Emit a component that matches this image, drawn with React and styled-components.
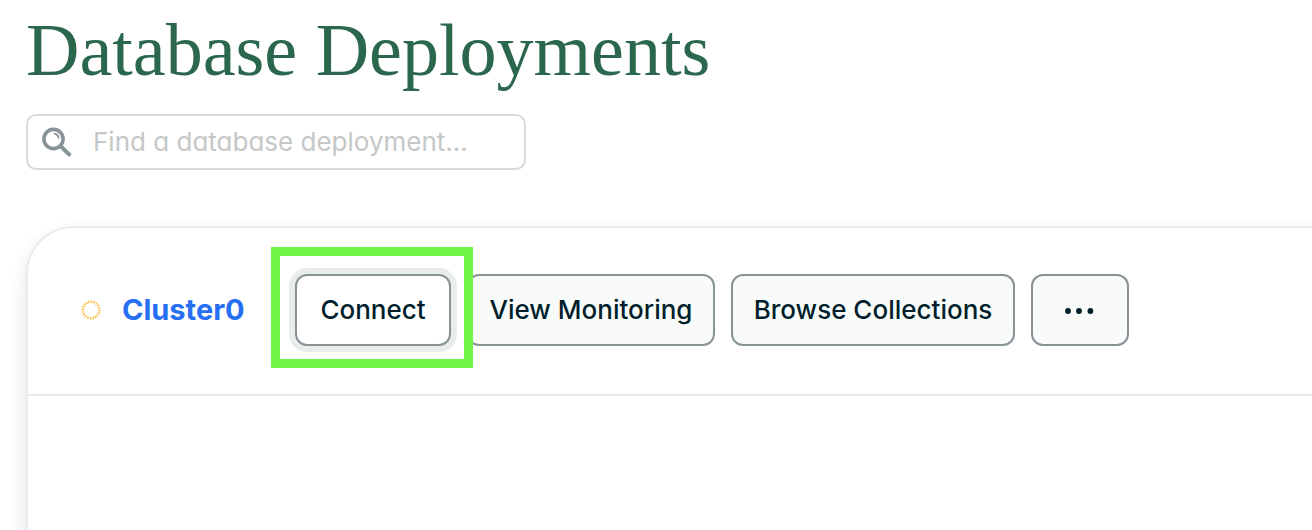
import React from "react";
import styled, { createGlobalStyle } from "styled-components";

const GlobalStyle = createGlobalStyle`
  *, *::before, *::after { box-sizing: border-box; }
  body {
    margin: 0;
    background: #fff;
    color: #001e2b;
    font-family: Inter, "Liberation Sans", sans-serif;
    font-feature-settings: "cv11" 1;
  }
`;

const Page = styled.main`
  display: flex;
  flex-direction: column;
  min-height: 100vh;
  padding: 10px 0 0 26px;
  overflow: hidden;
`;

const Title = styled.h1`
  margin: 0 0 24px;
  font-family: "Liberation Serif", serif;
  font-size: 74px;
  line-height: 80px;
  font-weight: 400;
  color: #2a674d;
`;

const SearchField = styled.label`
  display: flex;
  align-items: center;
  gap: 20px;
  width: 500px;
  max-width: calc(100% - 26px);
  height: 56px;
  padding: 0 14px;
  border: 2px solid #d5dbd9;
  border-radius: 10px;
  color: #889397;
`;

const SearchInput = styled.input`
  flex: 1;
  min-width: 0;
  padding: 0;
  border: 0;
  outline: 0;
  background: transparent;
  color: #001e2b;
  font: inherit;
  font-feature-settings: inherit;
  font-size: 26px;
  line-height: 36px;
  &::placeholder { color: #c3c7c6; opacity: 1; }
`;

const Card = styled.section`
  flex: 1 0 auto;
  margin: 56px -48px -48px 0;
  border: 2px solid #e8edeb;
  border-radius: 48px;
  background: #fff;
  box-shadow: 0 8px 20px -4px rgba(0, 30, 43, 0.2);
`;

const CardHeader = styled.header`
  display: flex;
  align-items: center;
  padding: 46px 54px 48px 53px;
  border-bottom: 2px solid #e8edeb;
`;

const ClusterLink = styled.a`
  width: 124px;
  margin: 0 49px 0 21px;
  color: #266ef2;
  font-size: 29px;
  line-height: 40px;
  font-weight: 700;
  text-decoration: none;
`;

const Actions = styled.div`
  display: flex;
  gap: 16px;
`;

const Highlight = styled.div`
  position: relative;
  z-index: 1;
  &::after {
    content: "";
    position: absolute;
    inset: -27px -22px -22px -24px;
    border: 9px solid #70f549;
    pointer-events: none;
  }
`;

const Button = styled.button`
  display: flex;
  align-items: center;
  justify-content: center;
  min-width: ${({ $minWidth }) => $minWidth}px;
  height: 72px;
  padding: 0 20px;
  border: 2px solid #889397;
  border-radius: 12px;
  background: ${({ $active }) => ($active ? "#fff" : "#f9fbfa")};
  box-shadow: ${({ $active }) => ($active ? "0 0 0 6px #e8edeb" : "none")};
  color: #001e2b;
  font: inherit;
  font-size: 26px;
  line-height: 36px;
  font-weight: 500;
  white-space: nowrap;
`;

const CardBody = styled.div`
  min-height: 180px;
`;

function SearchIcon() {
  return (
    <svg width="31" height="31" viewBox="0 0 31 31" fill="none" stroke="currentColor" aria-hidden="true">
      <circle cx="11.5" cy="12" r="9.6" strokeWidth="3.6" />
      <path d="M18.5 19l9.8 9.6" strokeWidth="4" />
      <path d="M11.8 6.7c2.8.2 4.6 2 4.9 4.8" strokeWidth="1.8" />
    </svg>
  );
}

function PendingIcon() {
  const dots = Array.from({ length: 20 }, (_, i) => i * 18);
  return (
    <svg width="20" height="20" viewBox="0 0 20 20" role="img" aria-label="Deploying">
      {dots.map((angle) => (
        <rect key={angle} x="9.3" y="0.4" width="1.4" height="2.6" fill="#f8bd40" transform={`rotate(${angle + 4} 10 10)`} />
      ))}
    </svg>
  );
}

function EllipsisIcon() {
  return (
    <svg width="30" height="8" viewBox="0 0 30 8" fill="currentColor" aria-hidden="true">
      <circle cx="3" cy="5" r="2.9" />
      <circle cx="14" cy="5" r="2.9" />
      <circle cx="25.4" cy="5" r="2.9" />
    </svg>
  );
}

export default function App() {
  return (
    <>
      <GlobalStyle />
      <Page>
        <Title>Database Deployments</Title>
        <SearchField>
          <SearchIcon />
          <SearchInput type="text" aria-label="Find a database deployment" placeholder="Find a database deployment..." />
        </SearchField>
        <Card>
          <CardHeader>
            <PendingIcon />
            <ClusterLink href="#cluster0">Cluster0</ClusterLink>
            <Actions>
              <Highlight>
                <Button type="button" $active $minWidth={156}>Connect</Button>
              </Highlight>
              <Button type="button" $minWidth={248}>View Monitoring</Button>
              <Button type="button" $minWidth={284}>Browse Collections</Button>
              <Button type="button" $minWidth={98} aria-label="More options"><EllipsisIcon /></Button>
            </Actions>
          </CardHeader>
          <CardBody />
        </Card>
      </Page>
    </>
  );
}
